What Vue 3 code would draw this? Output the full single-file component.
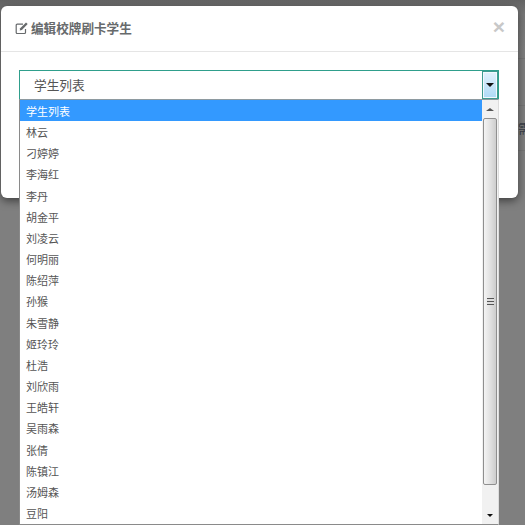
<script setup>
const students = ['学生列表','林云','刁婷婷','李海红','李丹','胡金平','刘凌云','何明丽','陈绍萍','孙猴','朱雪静','姬玲玲','杜浩','刘欣雨','王皓轩','吴雨森','张倩','陈镇江','汤姆森','豆阳']
</script>

<template>
  <div class="stage">
    <div class="behind">
      <div class="behind-row tall"></div>
      <div class="behind-row text"><span class="behind-text">需</span></div>
    </div>
    <div class="modal">
      <header class="head">
        <svg class="edit" width="14" height="14" viewBox="0 0 14 14" fill="none">
          <path d="M10.5 8v3.5a1 1 0 0 1-1 1H2.2a1 1 0 0 1-1-1V4.2a1 1 0 0 1 1-1H8" stroke="#676a6c" stroke-width="1.2"/>
          <path d="M5.2 7.2 11 1.4l1.7 1.7-5.8 5.8-2.2.5z" fill="#676a6c"/>
        </svg>
        <h4 class="title">编辑校牌刷卡学生</h4>
        <span class="close">×</span>
      </header>
      <div class="body">
        <div class="select">
          <span class="value">学生列表</span>
          <span class="arrow-btn"><i class="tri-down"></i></span>
          <div class="dropdown">
            <ul class="list">
              <li v-for="(name, i) in students" :key="name" :class="{ active: i === 0 }">{{ name }}</li>
            </ul>
            <div class="scrollbar">
              <span class="sb-btn"><i class="tri-up"></i></span>
              <div class="thumb">
                <span class="grip"></span>
              </div>
              <span class="sb-btn bottom"><i class="tri-down small"></i></span>
            </div>
          </div>
        </div>
      </div>
    </div>
  </div>
</template>

<style>
html, body { margin: 0; padding: 0; }
</style>

<style scoped>
.stage {
  position: relative;
  width: 525px;
  height: 525px;
  overflow: hidden;
  padding: 6px 7px 0 1px;
  box-sizing: border-box;
  background: linear-gradient(#636363 0, #787878 14px, #7f7f7f 50px);
  font-family: "Open Sans", "Noto Sans CJK SC", sans-serif;
}
.behind {
  position: absolute;
  top: 58px;
  right: 0;
  width: 7px;
  overflow: hidden;
  color: #3a3f4a;
  font-size: 13px;
}
.behind-row { border-top: 1px solid #767676; box-sizing: border-box; }
.behind-row.tall { height: 47px; }
.behind-row.text { height: 46px; border-bottom: 1px solid #767676; padding-top: 14px; line-height: 16px; }
.behind-text { display: block; width: 13px; }
.modal {
  position: relative;
  height: 192px;
  background: #fff;
  border-radius: 6px;
  box-shadow: 0 3px 9px rgba(0, 0, 0, .5);
}
.head {
  display: flex;
  align-items: center;
  height: 43px;
  padding: 0 13px 2px 14px;
  border-bottom: 1px solid #e5e5e5;
}
.edit { flex: none; margin-right: 2px; }
.title { margin: 0; flex: 1; font-size: 12.6px; font-weight: 700; color: #676a6c; }
.close { margin-top: -2px; font-family: "Liberation Sans", sans-serif; font-size: 21px; font-weight: 700; color: #c8c8c8; line-height: 1; }
.body { padding: 18px 19px 0 18px; }
.select {
  position: relative;
  display: flex;
  height: 30px;
  box-sizing: border-box;
  border: 1px solid #2f9f8c;
  background: #fff;
}
.value { flex: 1; padding-left: 14px; font-size: 12.7px; line-height: 29px; color: #555; }
.arrow-btn {
  width: 16px;
  display: flex;
  align-items: center;
  justify-content: center;
  border: 1px solid #3f9a90;
  box-shadow: inset 0 0 0 1px #f2f9fd;
  background: linear-gradient(#e2f1fc, #aedaf7);
  box-sizing: border-box;
}
.tri-down { width: 0; height: 0; border: 4px solid transparent; border-top: 4px solid #111; border-bottom: 0; }
.tri-down.small { border-width: 3px 3px 0; }
.tri-up { width: 0; height: 0; border: 4px solid transparent; border-bottom: 3px solid #555; border-top: 0; }
.dropdown {
  position: absolute;
  left: -1px;
  right: -1px;
  top: 28px;
  height: 426px;
  display: flex;
  background: #fff;
  border: 1px solid #8a8a8a;
  border-top-color: #8e9aa0;
  border-right-color: #dcdcdc;
  box-sizing: border-box;
}
.list { flex: 1; list-style: none; margin: 0; padding: 0; overflow: hidden; }
.list li {
  height: 21.16px;
  line-height: 23.6px;
  padding-left: 6px;
  font-size: 11px;
  color: #555;
}
.list li.active { background: #3399ff; color: #fff; }
.scrollbar {
  flex: none;
  width: 16px;
  display: flex;
  flex-direction: column;
  background: #f1f1f1;
}
.sb-btn { height: 18px; flex: none; display: flex; align-items: center; justify-content: center; }
.sb-btn.bottom { height: 39px; align-items: flex-end; padding-bottom: 7px; box-sizing: border-box; }
.thumb {
  flex: 1;
  margin: 0 1px;
  display: flex;
  align-items: center;
  justify-content: center;
  border: 1px solid #8f8f8f;
  border-radius: 2px;
  background: linear-gradient(90deg, #f4f4f4, #e2e2e2 50%, #cdcdcd);
}
.grip {
  width: 7px;
  height: 7px;
  background: repeating-linear-gradient(#555 0 1px, #ddd 1px 3px);
}
</style>
